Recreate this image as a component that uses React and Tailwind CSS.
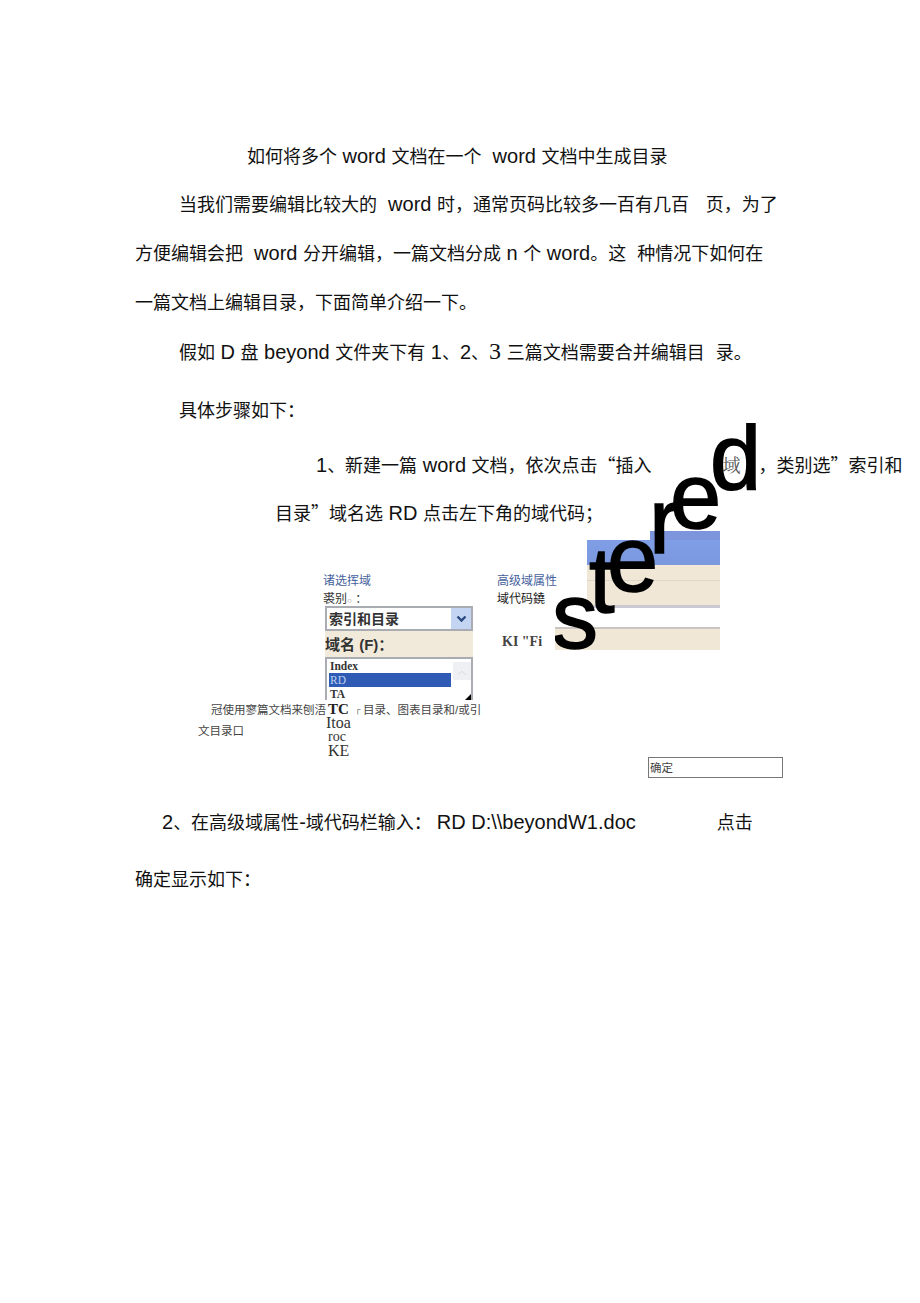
const sans = "font-['Liberation_Sans','Noto_Sans_CJK_SC',sans-serif]";
const serif = "font-['Liberation_Serif','Noto_Serif_CJK_SC','Noto_Sans_CJK_SC',serif]";

function Line({ className = "", children }) {
  return <p className={`h-[24px] whitespace-pre text-[18px] leading-[24px] text-[#111] ${className}`}>{children}</p>;
}

function L({ children }) {
  return <span className="text-[20px] leading-none">{children}</span>;
}

function Q({ children }) {
  return <span className="font-['Noto_Sans_CJK_SC',sans-serif]">{children}</span>;
}

function Letter({ className, children }) {
  return (
    <span className={`absolute text-[92px] leading-none text-black [-webkit-text-stroke:1.5px_black] ${sans} ${className}`}>{children}</span>
  );
}

export default function App() {
  return (
    <div className={`relative h-[1303px] w-[920px] overflow-hidden bg-white pl-[135px] pt-[145px] ${sans}`}>
      <Line className="pl-[112px]">如何将多个<L> word </L>文档在一个<L>  word </L>文档中生成目录</Line>
      <Line className="mt-[24px] pl-[44px]">当我们需要编辑比较大的<L>  word </L>时，通常页码比较多一百有几百<L>   </L>页，为了</Line>
      <Line className="mt-[25px]">方便编辑会把<L>  word </L>分开编辑，一篇文档分成<L> n </L>个<L> word</L>。这<L>  </L>种情况下如何在</Line>
      <Line className="mt-[25px]">一篇文档上编辑目录，下面简单介绍一下。</Line>
      <Line className="mt-[24px] pl-[44px]">
        假如<L> D </L>盘<L> beyond </L>文件夹下有<L> 1</L>、<L>2</L>、<span className={`text-[24px] leading-none ${serif}`}>3</span><L> </L>三篇文档需要合并编辑目<L>  </L>录。
      </Line>
      <Line className="mt-[36px] pl-[44px]">具体步骤如下：</Line>
      <Line className="mt-[29px] pl-[181px]">
        <L>1</L>、新建一篇<L> word </L>文档，依次点击<Q>“</Q>插入<span className="inline-block w-[71px]" />
        <span className={`text-[18px] text-[#555] ${serif}`}>域</span><span className="inline-block w-[18px]" />，类别选<Q>”</Q>索引和
      </Line>
      <Line className="mt-[24px] pl-[140px]">目录<Q>”</Q>域名选<L> RD </L>点击左下角的域代码；</Line>

      {/* dialog figure */}
      <div className="ml-[63px] mt-[5px] flex h-[254px] w-[590px] items-start">
        {/* left column */}
        <div className="w-[299px] shrink-0 pt-[44px]">
          <div className="ml-[125px] w-[150px]">
            <div className="h-[16px] text-[12px] leading-[16px] text-[#46629e]">诸选挥域</div>
            <div className="mt-[2px] h-[15px] text-[12px] leading-[16px] text-[#333]">裘别<span className="text-[8px] text-[#888]">○</span> ：</div>
            <div className="ml-[2px] flex h-[25px] w-[148px] items-center justify-between border-2 border-[#a9adb3] bg-white pl-[2px]">
              <span className="text-[14px] font-bold leading-none text-[#333]">索引和目录</span>
              <span className="flex h-full w-[20px] items-center justify-center bg-[#c3d5f3]">
                <svg width="11" height="8" viewBox="0 0 11 8"><path d="M1.5 1.5 5.5 5.5 9.5 1.5" fill="none" stroke="#2a4a80" strokeWidth="2.4" /></svg>
              </span>
            </div>
            <div className="ml-[2px] flex h-[26px] w-[148px] items-center bg-[#f1eadb] text-[15px] font-bold leading-none text-[#333]">域名 (F)：</div>
            <div className={`relative ml-[2px] h-[43px] w-[148px] overflow-hidden border-l-2 border-r-2 border-t-2 border-[#a9adb3] bg-white pl-[2px] text-[11.5px] font-bold leading-[14px] text-[#333] ${serif}`}>
              <div className="flex">
                <div className="w-[124px]">
                  <div className="pl-[1px]">Index</div>
                  <div className="bg-[#2f5bb5] pl-[1px] font-normal text-[#bcd0f0]">RD</div>
                  <div className="pl-[1px]">TA</div>
                </div>
                <div className="ml-[2px] mt-[3px] h-[18px] w-[18px] bg-[#eef0f3] text-center text-[9px] leading-[18px] text-[#c5c9d0]">︿</div>
              </div>
              <div className="absolute bottom-0 right-0 h-0 w-0 border-b-[6px] border-l-[6px] border-b-black border-l-transparent" />
            </div>
          </div>
        </div>

        {/* right column */}
        <div className="w-[58px] shrink-0 whitespace-nowrap pt-[44px]">
          <div className="h-[16px] text-[12px] leading-[16px] text-[#46629e]">高级域属性</div>
          <div className="mt-[2px] h-[16px] text-[12px] leading-[16px] text-[#222]">域代码鐃</div>
          <div className={`ml-[5px] mt-[27px] text-[14px] font-bold leading-[16px] text-[#444] ${serif}`}>KI "Fi</div>
        </div>
      </div>

      {/* image fragments behind the stepped word */}
      <div className="absolute left-[555px] top-[531px] w-[165px]">
        <div className="ml-[95px] h-[9px] bg-[#7d95dc]" />
        <div className="ml-[32px] h-[25px] bg-[linear-gradient(#7f9ee6,#7b98de)]" />
        <div className="ml-[32px] h-[15px] bg-[#f0e7d6]" />
        <div className="ml-[32px] h-[28px] border-t border-[#ddd6cb] border-b-[3px] border-b-[#c9c9d2] bg-[#f0e7d6]" />
        <div className="mt-[19px] h-[23px] border-t-2 border-[#c9c5c2] bg-[#f0e7d6]" />
      </div>

      {/* the word that climbs over the figure */}
      <div className="absolute left-[555px] top-[423px] h-[227px] w-[205px] overflow-hidden">
        <Letter className="left-[-3px] top-[147px]">s</Letter>
        <Letter className="left-[34px] top-[111px]">t</Letter>
        <Letter className="left-[52px] top-[90px]">e</Letter>
        <Letter className="left-[94px] top-[52px]">r</Letter>
        <Letter className="left-[115px] top-[27px]">e</Letter>
        <Letter className="left-[155px] top-[-12px]">d</Letter>
      </div>

      {/* caption sitting over the figure */}
      <div className="absolute left-[198px] top-[700px] w-[300px] whitespace-nowrap text-[11.5px] leading-[20px] text-[#444]">
        <div className="flex">
          <span className="pl-[13px]">冠使用寥篇文档来刨浯</span>
          <span className={`w-[29px] pl-[2px] text-[15px] font-bold leading-[18px] text-[#222] ${serif}`}>TC</span>
          <span className="w-[8px] text-[8px]">┌</span>
          <span className="whitespace-pre">目录、图表目录和/或引</span>
        </div>
        <div className="mt-[1px]">文目录口</div>
      </div>
      <div className={`absolute left-[326px] top-[715px] text-[#333] ${serif}`}>
        <div className="text-[16px] leading-[15px]">Itoa</div>
        <div className="ml-[2px] text-[14px] leading-[14px]">roc</div>
        <div className="ml-[2px] text-[16px] leading-[14px]">KE</div>
      </div>

      <div className="absolute left-[648px] top-[757px] flex h-[21px] w-[135px] items-center border border-[#777] pl-[1px] pt-[3px] text-[11.5px] text-[#444]">确定</div>

      <Line className="mt-[28px] pl-[27px]"><L>2</L>、在高级域属性<L>-</L>域代码栏输入：<span className="inline-block w-[5px]" /><L>RD D:\\beyondW1.doc</L><span className="inline-block w-[81px]" />点击</Line>
      <Line className="mt-[33px]">确定显示如下：</Line>
    </div>
  );
}
